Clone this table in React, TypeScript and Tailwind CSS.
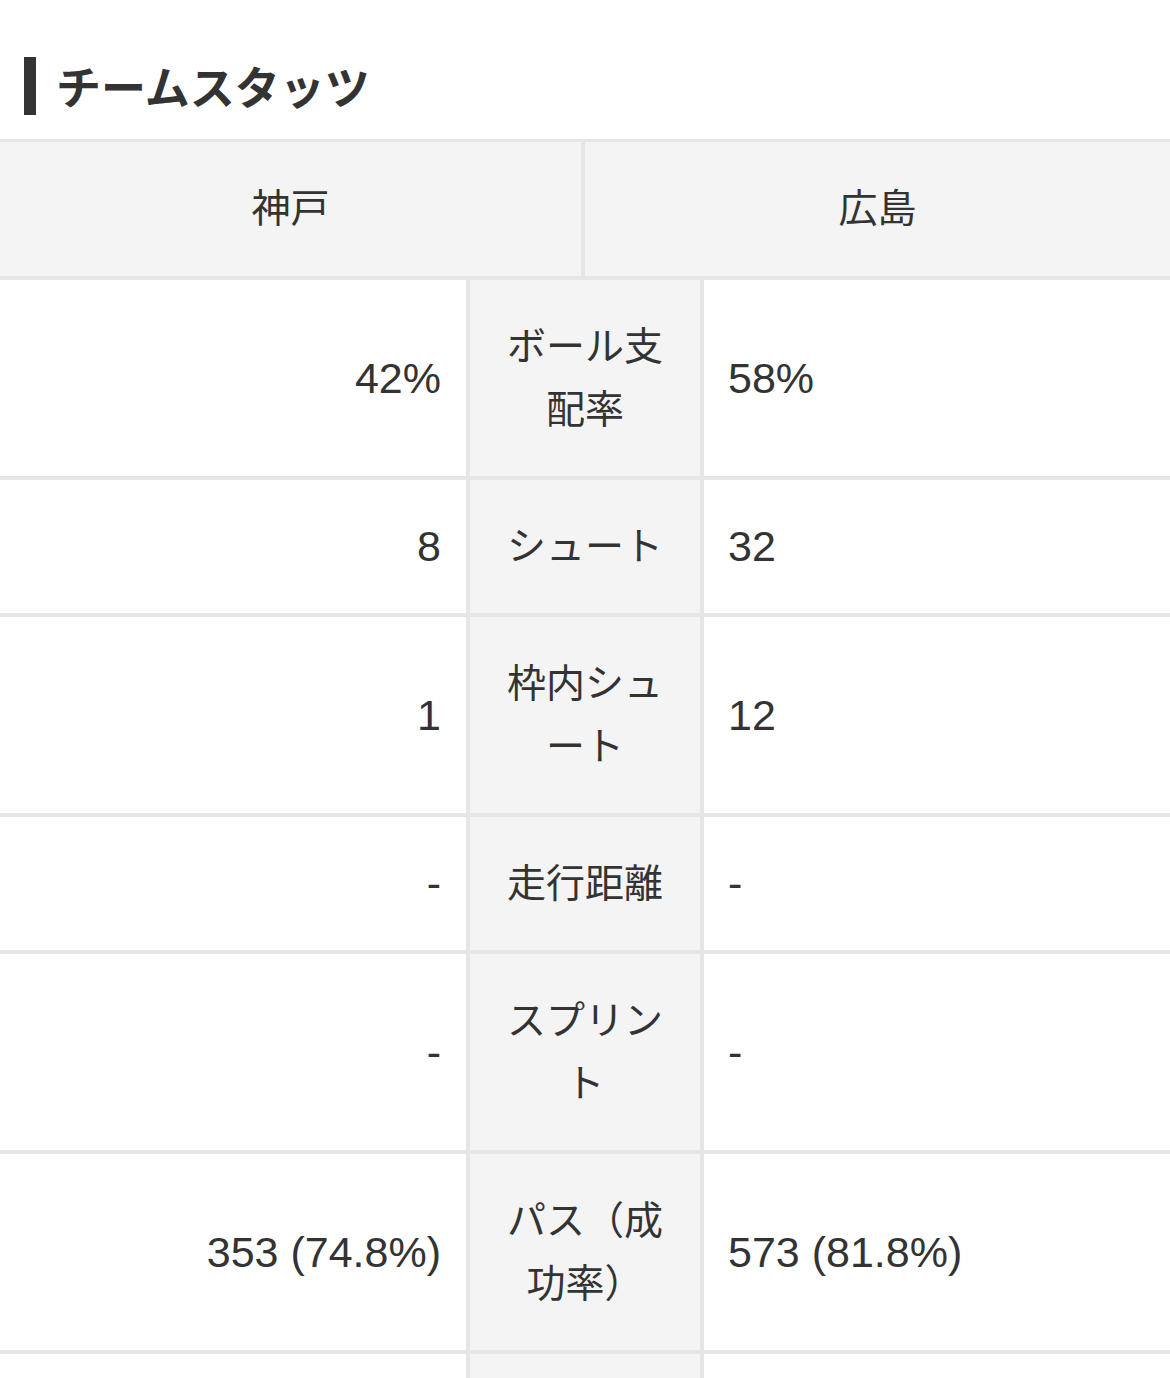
import React from 'react'

type Stat = { label: string; home: string; away: string }

const stats: Stat[] = [
  { label: 'ボール支配率', home: '42%', away: '58%' },
  { label: 'シュート', home: '8', away: '32' },
  { label: '枠内シュート', home: '1', away: '12' },
  { label: '走行距離', home: '-', away: '-' },
  { label: 'スプリント', home: '-', away: '-' },
  { label: 'パス（成功率）', home: '353 (74.8%)', away: '573 (81.8%)' },
]

export default function App() {
  return (
    <div className="w-[1170px] min-h-[1378px] bg-white text-[#333] font-['Liberation_Sans','Noto_Sans_CJK_JP',sans-serif]">
      {/* Section title */}
      <h2 className="flex items-center pt-[57px] pb-[24px]">
        <span className="ml-[24px] w-[12px] h-[58px] bg-[#333]" />
        <span className="ml-[20px] text-[45px] leading-[58px] font-bold font-['Noto_Sans_CJK_JP',sans-serif]">
          チームスタッツ
        </span>
      </h2>

      <div className="border-t-[3px] border-[#e6e6e6]">
        {/* Team header */}
        <div className="grid grid-cols-2 bg-[#f4f4f4] border-b-4 border-[#e6e6e6] text-[39px]">
          <div className="h-[134px] flex items-center justify-center border-r-4 border-[#e6e6e6]">
            神戸
          </div>
          <div className="h-[134px] flex items-center justify-center">広島</div>
        </div>

        {stats.map((s) => (
          <div
            key={s.label}
            className="grid grid-cols-[466px_238px_1fr] border-b-4 border-[#e6e6e6] leading-[63px]"
          >
            <div className="flex items-center justify-end pr-[25px] py-[35px] text-[43px]">{s.home}</div>
            <div className="flex items-center justify-center px-[24px] py-[35px] bg-[#f4f4f4] border-x-4 border-[#e6e6e6] text-center text-[39px]">
              {s.label}
            </div>
            <div className="flex items-center pl-[24px] py-[35px] text-[43px]">{s.away}</div>
          </div>
        ))}

        {/* next row, below the fold */}
        <div className="grid grid-cols-[466px_238px_1fr] h-[133px]">
          <div />
          <div className="bg-[#f4f4f4] border-x-4 border-[#e6e6e6]" />
          <div />
        </div>
      </div>
    </div>
  )
}
